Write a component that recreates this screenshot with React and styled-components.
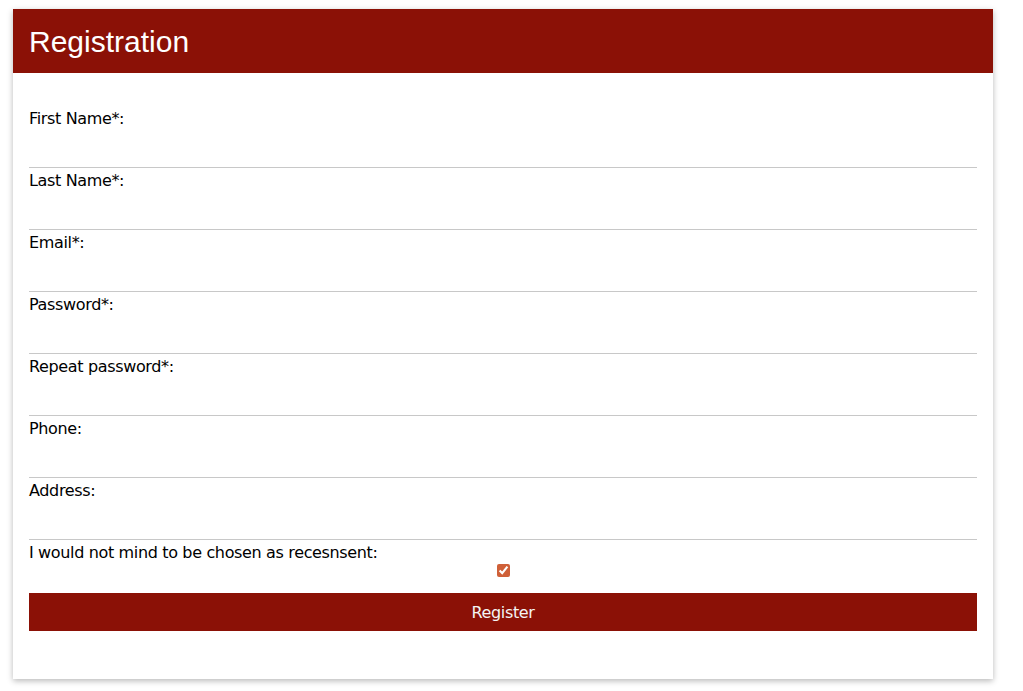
import React from 'react';
import styled, { createGlobalStyle } from 'styled-components';

const GlobalStyle = createGlobalStyle`
	body {
		margin: 0;
		background: #fff;
		font-family: 'DejaVu Sans', Verdana, sans-serif;
	}
`;

const Page = styled.div`
	padding: 9px 13px 12px;
`;

const Card = styled.div`
	width: 980px;
	background: #fff;
	box-shadow: 0 2px 6px rgba(0, 0, 0, 0.28);
`;

const Header = styled.h1`
	margin: 0;
	height: 63px;
	padding: 1px 0 0 16px;
	background-color: #8b1106;
	color: #fff;
	font-family: 'Liberation Sans', Arial, sans-serif;
	font-size: 30px;
	font-weight: normal;
	line-height: 63px;
`;

const Form = styled.form`
	display: flex;
	flex-direction: column;
	padding: 33px 16px 48px;
`;

const Field = styled.div`
	display: flex;
	flex-direction: column;
`;

const Label = styled.label`
	margin-top: 3px;
	font-size: 16px;
	letter-spacing: -0.35px;
	line-height: 19px;
	color: #000;
`;

const Input = styled.input`
	box-sizing: border-box;
	height: 40px;
	padding: 0;
	border: none;
	border-bottom: 1px solid #c8c8c8;
	outline: none;
	font-family: inherit;
	font-size: 16px;
	background: transparent;
`;

const Check = styled.input`
	align-self: center;
	width: 13px;
	height: 13px;
	margin: 2px 0 16px;
	accent-color: #cf6038;
`;

const Button = styled.button`
	height: 38px;
	border: none;
	background-color: #8b1106;
	color: #f4f4f4;
	font-family: inherit;
	font-size: 16px;
	letter-spacing: -0.35px;
	cursor: pointer;
`;

const fields = [
	{ label: 'First Name*:', type: 'text' },
	{ label: 'Last Name*:', type: 'text' },
	{ label: 'Email*:', type: 'email' },
	{ label: 'Password*:', type: 'password' },
	{ label: 'Repeat password*:', type: 'password' },
	{ label: 'Phone:', type: 'tel' },
	{ label: 'Address:', type: 'text' },
];

const App = () => (
	<Page>
		<GlobalStyle />
		<Card>
			<Header>Registration</Header>
			<Form onSubmit={e => e.preventDefault()}>
				{fields.map(f => (
					<Field key={f.label}>
						<Label>{f.label}</Label>
						<Input type={f.type} />
					</Field>
				))}
				<Field>
					<Label>I would not mind to be chosen as recesnsent:</Label>
					<Check type="checkbox" defaultChecked />
				</Field>
				<Button type="submit">Register</Button>
			</Form>
		</Card>
	</Page>
);

export default App;
